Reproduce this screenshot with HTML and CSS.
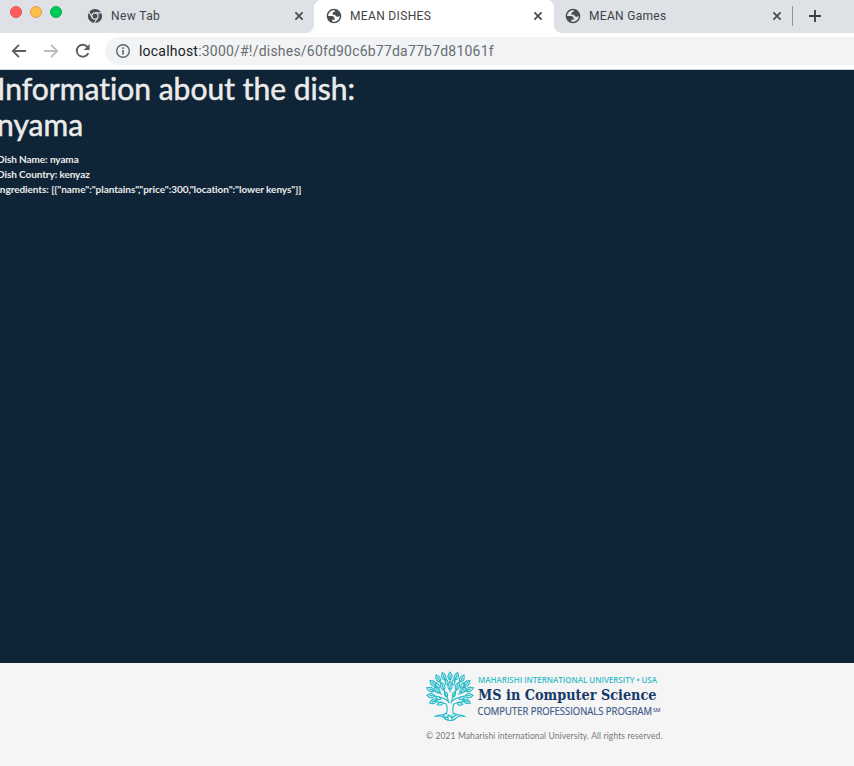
FILE: index.html
```
<!DOCTYPE html>
<html lang="en">
<head>
<meta charset="utf-8">
<title>MEAN DISHES</title>
<link rel="stylesheet" href="styles.css">
</head>
<body>
<svg class="defs" aria-hidden="true">
  <defs>
    <symbol id="globe" viewBox="1 1 22 22"><path fill="#494c50" fill-rule="evenodd" d="M12 2C6.48 2 2 6.48 2 12s4.48 10 10 10 10-4.48 10-10S17.52 2 12 2zM4 12h4.4c3.407.022 4.922 1.73 4.543 5.127H9.488v2.47a8.004 8.004 0 0 0 10.498-8.083C19.327 12.504 18.332 13 17 13c-2.137 0-3.206-.916-3.206-2.75h-3.748c-.274-2.728.683-4.092 2.87-4.092 0-.975.327-1.597.811-1.97A8.004 8.004 0 0 0 4 12z"/></symbol>
    <symbol id="close" viewBox="0 0 10 10"><path d="M1.4 1.4l7.2 7.2M8.6 1.4L1.4 8.6" fill="none" stroke="#45494d" stroke-width="1.7"/></symbol>
    <g id="leaf"><path d="M0 0C-3-2-2.7-5 0-8C2.7-5 3-2 0 0zM0 2V-5"/></g>
    <g id="bud"><path d="M0 0C-2-1.5-2-3.5 0-6C2-3.5 2-1.5 0 0z"/></g>
  </defs>
</svg>
<header class="browser">
  <div class="tabs">
    <div class="tab first">
      <div class="lights"><i class="red"></i><i class="yellow"></i><i class="green"></i></div>
      <svg class="favicon" viewBox="0 0 16 16"><circle cx="8" cy="8" r="7.1" fill="#494c50"/><circle cx="8" cy="8" r="3.1" fill="#494c50" stroke="#dee1e6" stroke-width="1.2"/><path d="M8 4.9h6.5M5.3 9.6L2 4M10.7 9.6L7.4 15" stroke="#dee1e6" stroke-width="1.1"/></svg>
      <span class="title newtab">New Tab</span>
      <svg class="close"><use href="#close"/></svg>
    </div>
    <div class="tab active">
      <svg class="favicon"><use href="#globe"/></svg>
      <span class="title dishes">MEAN DISHES</span>
      <svg class="close"><use href="#close"/></svg>
    </div>
    <div class="tab last">
      <svg class="favicon"><use href="#globe"/></svg>
      <span class="title games">MEAN Games</span>
      <svg class="close"><use href="#close"/></svg>
    </div>
    <div class="rest"><i class="divider"></i><svg class="plus" viewBox="0 0 12 12"><path d="M6 0v12M0 6h12" stroke="#3c4043" stroke-width="1.9"/></svg></div>
  </div>
  <div class="toolbar">
    <svg class="nav" viewBox="0 0 16 16"><path d="M15 8H2M8 1.8L1.8 8L8 14.2" fill="none" stroke="#5a5e63" stroke-width="1.8"/></svg>
    <svg class="nav" viewBox="0 0 16 16"><path d="M1 8h13M8 1.8L14.2 8L8 14.2" fill="none" stroke="#babcbe" stroke-width="1.8"/></svg>
    <svg class="nav" viewBox="0 0 16 16"><path d="M13.3 10.1A6 6 0 1 1 12.5 4" fill="none" stroke="#5a5e63" stroke-width="1.9"/><path d="M14.6 1v6H8.7z" fill="#5a5e63"/></svg>
    <div class="address">
      <svg class="info" viewBox="0 0 16 16"><circle cx="8" cy="8" r="6.3" fill="none" stroke="#5f6368" stroke-width="1.4"/><path d="M8 7v4.5M8 4.3v1.6" stroke="#5f6368" stroke-width="1.6"/></svg>
      <span class="url"><b>localhost</b>:3000/#!/dishes/60fd90c6b77da77b7d81061f</span>
    </div>
  </div>
</header>
<main>
  <h1>Information about the dish:<br>nyama</h1>
  <div class="details">
    <p>Dish Name: nyama</p>
    <p>Dish Country: kenyaz</p>
    <p class="ingredients">Ingredients: [{"name":"plantains","price":300,"location":"lower kenys"}]</p>
  </div>
</main>
<footer>
  <svg class="logo" viewBox="0 0 238 54">
    <g class="tree">
      <g class="leaves">
        <use href="#leaf" transform="translate(25 12)"/><use href="#leaf" transform="translate(20 12) rotate(-20)"/><use href="#leaf" transform="translate(30 12) rotate(20)"/>
        <use href="#leaf" transform="translate(15 14) rotate(-30)"/><use href="#leaf" transform="translate(35 14) rotate(30)"/>
        <use href="#leaf" transform="translate(11 18) rotate(-48)"/><use href="#leaf" transform="translate(39 18) rotate(48)"/>
        <use href="#leaf" transform="translate(9 23) rotate(-67)"/><use href="#leaf" transform="translate(41 23) rotate(67)"/>
        <use href="#leaf" transform="translate(10 28) rotate(-85)"/><use href="#leaf" transform="translate(40 28) rotate(85)"/>
        <use href="#leaf" transform="translate(12 32) rotate(-112)"/><use href="#leaf" transform="translate(38 32) rotate(112)"/>
        <use href="#leaf" transform="translate(25 22)"/><use href="#leaf" transform="translate(19 22) rotate(-20)"/><use href="#leaf" transform="translate(31 22) rotate(20)"/>
        <use href="#leaf" transform="translate(15 25) rotate(-45)"/><use href="#leaf" transform="translate(35 25) rotate(45)"/>
        <use href="#bud" transform="translate(16 31) rotate(-70)"/><use href="#bud" transform="translate(34 31) rotate(70)"/>
        <use href="#bud" transform="translate(18 35) rotate(-105)"/><use href="#bud" transform="translate(32 35) rotate(105)"/>
        <use href="#bud" transform="translate(22 29) rotate(-20)"/><use href="#bud" transform="translate(28 29) rotate(20)"/>
        <use href="#bud" transform="translate(22 17) rotate(-10)"/><use href="#bud" transform="translate(28 17) rotate(10)"/>
        <use href="#bud" transform="translate(14 20) rotate(-30)"/><use href="#bud" transform="translate(36 20) rotate(30)"/>
      </g>
      <path d="M21.5 46C22.5 43 22.5 38 21 36C19 34 14 35 10 33M28.5 46C27.5 43 27.5 38 29 36C31 34 36 35 40 33M23.5 34C22 31 18 30 14 29M26.5 34C28 31 32 30 36 29M24 35C23 29 20 27 19 22M26 35C27 29 30 27 31 22"/>
      <path d="M21.5 45C18 48 14 46 10 48.5M28.5 45C32 48 36 46 40 48.5M10 48.5C17 47 18 49 20 51C23 53 28 53 30 51C32 49 34 47 40 48.5M18 47l3 3 3-3 3 3 4-3M23 47v5M27 47v5"/>
    </g>
    <text class="university" x="53" y="15.4" textLength="179" lengthAdjust="spacingAndGlyphs">MAHARISHI INTERNATIONAL UNIVERSITY • USA</text>
    <text class="degree" x="53" y="32.2" textLength="178.5" lengthAdjust="spacingAndGlyphs">MS in Computer Science</text>
    <text class="program" x="52.5" y="47.1" textLength="174.5" lengthAdjust="spacingAndGlyphs">COMPUTER PROFESSIONALS PROGRAM</text>
    <text class="mark" x="228" y="43.5" textLength="7.5" lengthAdjust="spacingAndGlyphs">SM</text>
  </svg>
  <p class="copyright">© 2021 Maharishi international University. All rights reserved.</p>
</footer>
</body>
</html>
```
FILE: styles.css
```
* { box-sizing: border-box; }
body {
  margin: 0;
  height: 766px;
  overflow: hidden;
  display: flex;
  flex-direction: column;
  background: #f5f5f5;
  font-family: Lato, sans-serif;
  font-variant-ligatures: none;
}
svg { display: block; flex: none; }
.defs { position: absolute; width: 0; height: 0; }
p, h1 { margin: 0; white-space: nowrap; }

.browser { height: 70px; flex: none; background: #fff; border-bottom: 1px solid #d5d8dc; font-family: Roboto, sans-serif; }
.tabs { display: flex; height: 33px; background: #fff; }
.tab { display: flex; align-items: center; height: 33px; padding-bottom: 1px; background: #dee1e6; color: #3f4347; }
.first { width: 314px; border-bottom-right-radius: 8px; padding-right: 10px; }
.active {
  width: 240px;
  padding: 0 11px 1px 12px;
  background:
    radial-gradient(circle at 8px 8px, #fff 8px, #dee1e6 8.5px) 0 0 / 8px 8px no-repeat,
    radial-gradient(circle at 0 8px, #fff 8px, #dee1e6 8.5px) 100% 0 / 8px 8px no-repeat,
    #fff;
}
.last { width: 238px; padding: 0 10px 1px 11px; border-bottom-left-radius: 8px; }
.rest { flex: 1; display: flex; align-items: center; background: #dee1e6; padding-bottom: 1px; }
.lights { display: flex; gap: 8px; width: 87px; padding-left: 10px; margin-top: -8px; }
.lights i { width: 12px; height: 12px; border-radius: 50%; border: 1px solid; }
.lights .red { background: #ff5f5c; border-color: #e85351; }
.lights .yellow { background: #ffbd4c; border-color: #e1a33f; }
.lights .green { background: #00ca56; border-color: #00b246; }
.favicon { width: 16px; height: 16px; }
.title { margin-left: 8px; font-size: 12px; line-height: 16px; white-space: nowrap; }
.newtab { letter-spacing: .4px; }
.dishes { letter-spacing: .34px; }
.games { letter-spacing: .3px; }
.close { width: 10px; height: 10px; margin-left: auto; }
.divider { width: 1px; height: 20px; background: #909398; }
.plus { width: 12px; height: 12px; margin-left: 16px; }
.toolbar { display: flex; align-items: center; height: 36px; gap: 16px; padding-left: 11px; }
.nav { width: 16px; height: 16px; }
.address { flex: 1; display: flex; align-items: center; height: 28px; margin-left: -2px; padding-left: 10px; background: #f1f3f4; border-radius: 14px 0 0 14px; }
.info { width: 16px; height: 16px; }
.url { margin-left: 8px; font-size: 14px; line-height: 20px; letter-spacing: .21px; color: #696d71; white-space: nowrap; }
.url b { font-weight: 400; color: #202124; }

main { height: 593px; flex: none; background: #0f2537; color: #ebebeb; overflow: hidden; }
h1 { margin-left: -3px; font-size: 30px; line-height: 36px; font-weight: 400; letter-spacing: .02px; -webkit-text-stroke: .5px #ebebeb; }
.details { margin: 10px 0 0 -3px; font-size: 10px; line-height: 15px; font-weight: 700; letter-spacing: -.09px; }
.ingredients { letter-spacing: -.055px; }

footer { flex: 1; padding: 5px 0 0 425px; }
.logo { width: 238px; height: 54px; }
.tree { fill: #a5e2e7; fill-opacity: .45; stroke: #24b9c8; stroke-width: 1.1; stroke-linecap: round; }
.tree > path { fill: none; }
.university { font: 600 8px "Open Sans", sans-serif; fill: #32bdc7; }
.degree { font: 700 15.5px "DejaVu Serif", serif; fill: #173a69; }
.program { font: 400 10px "Open Sans", sans-serif; fill: #3f5b88; stroke: #3f5b88; stroke-width: .2; }
.mark { font: 600 4.5px "Open Sans", sans-serif; fill: #3f5b88; }
.copyright { margin: 7px 0 0 1px; font-size: 8.5px; line-height: 14px; letter-spacing: .105px; color: #777; }
```
